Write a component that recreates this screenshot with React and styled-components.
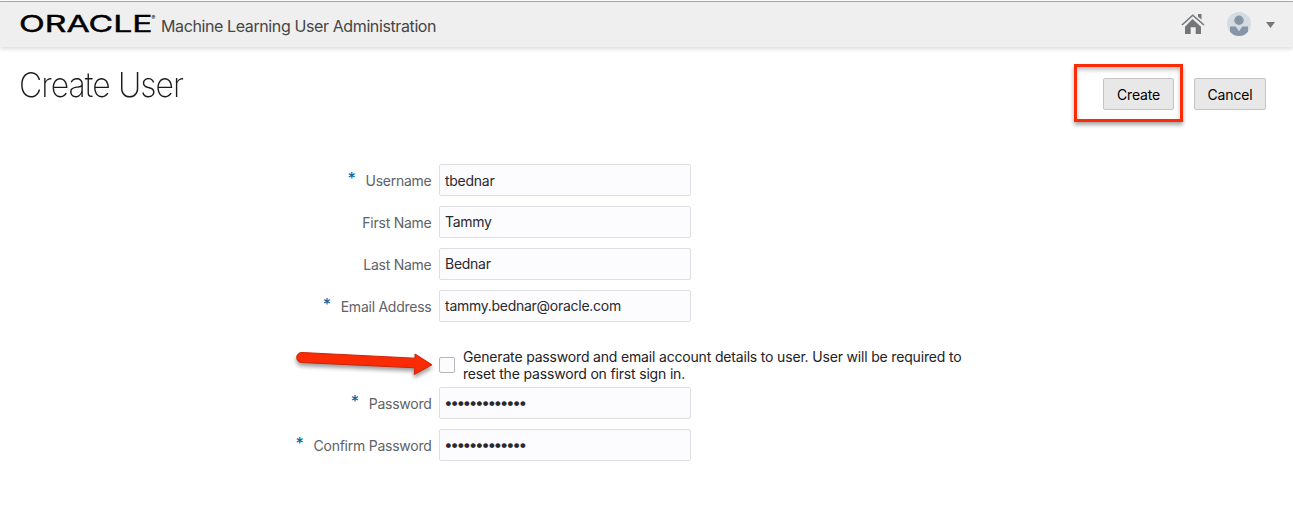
import React from 'react';
import styled, { createGlobalStyle } from 'styled-components';

const GlobalStyle = createGlobalStyle`
  * { box-sizing: border-box; }
  body {
    margin: 0;
    background: #fff;
    font-family: Inter, "Liberation Sans", sans-serif;
    overflow: hidden;
  }
`;

const Page = styled.div`
  height: 505px;
  padding-top: 1px;
`;

const Header = styled.header`
  display: flex;
  align-items: flex-start;
  height: 46px;
  padding: 0 18px 0 18px;
  border-top: 1px solid #a3a8a8;
  background: #efefef;
  box-shadow: 0 2px 4px rgba(0, 0, 0, 0.14);
`;

const Logo = styled.svg`
  flex: none;
  width: 141px;
  height: 44px;
  overflow: visible;
`;

const Product = styled.span`
  margin: 13px auto 0 2px;
  font-size: 16px;
  line-height: 22px;
  letter-spacing: -0.39px;
  color: #454545;
  white-space: nowrap;
`;

const HomeIcon = styled.svg`
  width: 24px;
  height: 22px;
  margin: 11px 22px 0 0;
`;

const Avatar = styled.svg`
  width: 24px;
  height: 24px;
  margin: 10px 15px 0 0;
`;

const Caret = styled.svg`
  width: 9px;
  height: 6px;
  margin-top: 20px;
`;

const TitleBar = styled.div`
  display: flex;
  justify-content: space-between;
  height: 117px;
  padding: 17px 27px 0 19px;
`;

const Title = styled.h1`
  margin: 0;
  font-size: 34px;
  line-height: 42px;
  font-weight: 220;
  letter-spacing: -1px;
  color: #1a1a1a;
  transform: scaleX(0.942);
  transform-origin: left;
`;

const Actions = styled.div`
  display: flex;
  gap: 11px;
`;

const Highlight = styled.div`
  height: 58px;
  padding: 11px 6px 0 26px;
  border: 3px solid #fb2b05;
  box-shadow: 0 3px 4px rgba(0, 0, 0, 0.35), inset 0 3px 4px rgba(0, 0, 0, 0.25);
`;

const Button = styled.button`
  display: block;
  width: ${(p) => p.$width}px;
  height: 32px;
  margin-top: ${(p) => p.$top || 0}px;
  padding: 0;
  border: 1px solid #c4c4c4;
  border-radius: 2px;
  background: #e8e8e8;
  color: #000;
  font: 14px Inter, sans-serif;
  letter-spacing: -0.15px;
`;

const Form = styled.form`
  position: relative;
  display: flex;
  flex-direction: column;
  gap: 10px;
`;

const Row = styled.div`
  display: flex;
  gap: 7.5px;
  height: 32px;
`;

const Label = styled.label`
  display: flex;
  justify-content: flex-end;
  gap: 10px;
  width: 431.5px;
  padding-top: 7px;
  font-size: 14px;
  line-height: 20px;
  letter-spacing: -0.25px;
  color: #606266;
`;

const Required = styled.span`
  margin-top: -3px;
  font-size: 16px;
  font-weight: 500;
  color: #0a67a3;
`;

const Field = styled.input`
  width: 252px;
  height: 32px;
  padding: ${(p) => (p.$low ? '1px 5px 0' : '0 5px 1px')};
  border: 1px solid #dfdfe3;
  border-radius: 2px;
  outline: none;
  background: #fcfbfe;
  color: #2a2a2e;
  font: 14px Inter, sans-serif;
  letter-spacing: -0.27px;

  &[type='password'] {
    padding-left: 4px;
    font-size: 15.5px;
    letter-spacing: -2.52px;
  }
`;

const CheckRow = styled.label`
  display: flex;
  gap: 8px;
  height: 45px;
  padding: 16px 0 0 439px;
`;

const Checkbox = styled.input`
  appearance: none;
  flex: none;
  width: 16px;
  height: 16px;
  margin: 9px 0 0;
  border: 1px solid #b7b7bb;
  border-radius: 2px;
  background: #fcfbfe;
`;

const CheckText = styled.span`
  font-size: 14px;
  line-height: 17px;
  letter-spacing: -0.175px;
  color: #222226;
  white-space: nowrap;
`;

const Arrow = styled.svg`
  position: absolute;
  left: 290px;
  top: 182px;
  width: 146px;
  height: 36px;
  filter: drop-shadow(0 3px 2px rgba(0, 0, 0, 0.4));
`;

function FormRow({ label, value, required, low, type = 'text' }) {
  return (
    <Row>
      <Label>
        {required && <Required>*</Required>}
        <span>{label}</span>
      </Label>
      <Field type={type} defaultValue={value} $low={low} />
    </Row>
  );
}

export default function App() {
  return (
    <Page>
      <GlobalStyle />
      <Header>
        <Logo viewBox="0 0 141 44">
          <text x="1" y="30" textLength="133.5" lengthAdjust="spacingAndGlyphs" fontFamily="Inter, sans-serif" fontWeight="400" fontSize="23" stroke="#000" strokeWidth="0.45">ORACLE</text>
          <text x="133.5" y="17.5" fontFamily="Inter, sans-serif" fontSize="5.5">®</text>
        </Logo>
        <Product>Machine Learning User Administration</Product>
        <HomeIcon viewBox="0 0 24 22" fill="#747777">
          <path d="M11.5 6 20 13.8V21h-5.3v-6.7h-5V21H4v-7.2z" />
          <path d="M1 12 11.7 2.2 23 12" fill="none" stroke="#747777" strokeWidth="1.6" />
          <path d="M17 1h3.5v5.5L17 3.7z" />
        </HomeIcon>
        <Avatar viewBox="0 0 24 24">
          <circle cx="12" cy="12" r="12" fill="#d5dbe3" />
          <circle cx="12" cy="8.2" r="4.7" fill="#8796a6" />
          <path d="M3 14.5h5.7L12 19.2l3.3-4.7H21v5.2A12 12 0 0 1 12 24a12 12 0 0 1-9-4.3z" fill="#8796a6" />
        </Avatar>
        <Caret viewBox="0 0 9 6"><path d="M0 0h9L4.5 6z" fill="#747777" /></Caret>
      </Header>
      <TitleBar>
        <Title>Create User</Title>
        <Actions>
          <Highlight><Button type="button" $width={71}>Create</Button></Highlight>
          <Button type="button" $width={72} $top={14}>Cancel</Button>
        </Actions>
      </TitleBar>
      <Form>
        <FormRow label="Username" value="tbednar" required low />
        <FormRow label="First Name" value="Tammy" />
        <FormRow label="Last Name" value="Bednar" />
        <FormRow label="Email Address" value="tammy.bednar@oracle.com" required />
        <CheckRow>
          <Checkbox type="checkbox" />
          <CheckText>
            Generate password and email account details to user. User will be required to
            <br />
            reset the password on first sign in.
          </CheckText>
        </CheckRow>
        <FormRow label="Password" value="tbednar123456" type="password" required />
        <FormRow label="Confirm Password" value="tbednar123456" type="password" required />
        <Arrow viewBox="0 0 146 36">
          <path
            d="M12 6.5 125 12.2V8L142 18.8 124.2 28.5 124.8 21.8 11.4 16.5A5 5 0 0 1 12 6.5Z"
            fill="#fb2b05"
            stroke="#c92508"
            strokeLinejoin="round"
          />
        </Arrow>
      </Form>
    </Page>
  );
}
